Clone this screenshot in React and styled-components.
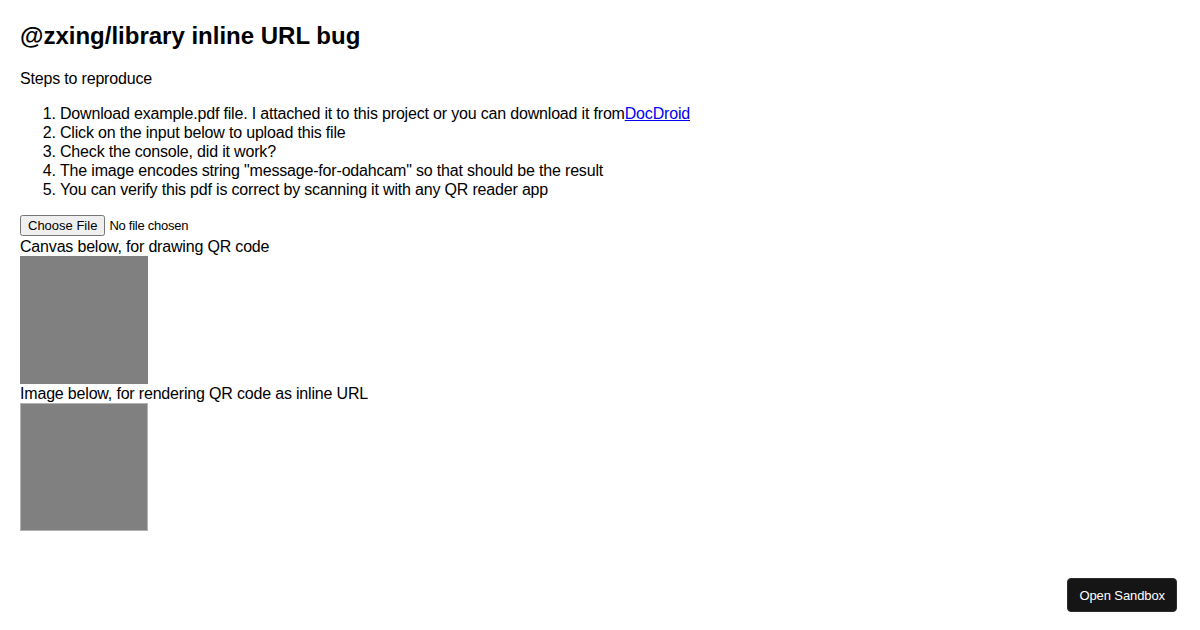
import styled, { createGlobalStyle } from "styled-components";

const GlobalStyle = createGlobalStyle`
  body {
    margin: 0;
    padding: 0 20px;
    font-family: "Liberation Sans", Arial, sans-serif;
    color: #000;
    background: #fff;
  }
`;

const Title = styled.h2`
  font-size: 24px;
  font-weight: bold;
  margin: 22px 0 19px;
`;

const Intro = styled.p`
  font-size: 16px;
  line-height: 19px;
  letter-spacing: -0.18px;
  margin: 0;
`;

const Steps = styled.ol`
  margin: 16px 0 13px;
  padding-left: 40px;
  font-size: 16px;
  line-height: 19px;
  letter-spacing: -0.18px;
`;

const DocLink = styled.a`
  color: #0000ee;
  text-decoration: underline;
`;

const FileRow = styled.div`
  font-size: 16px;
  line-height: 25px;
  height: 25px;
`;

const FileInput = styled.input`
  font-family: "Liberation Sans", Arial, sans-serif;
  font-size: 13px;
  letter-spacing: -0.25px;
  vertical-align: middle;
`;

const Caption = styled.div`
  font-size: 16px;
  line-height: 19px;
  letter-spacing: -0.18px;
`;

const QrBox = styled.div`
  width: 128px;
  height: 128px;
  box-sizing: border-box;
  background: #808080;
  border: ${(p) => (p.$framed ? "1px solid #b3b3b3" : "none")};
`;

const SandboxButton = styled.button`
  position: fixed;
  right: 23px;
  bottom: 18px;
  background: #151515;
  color: #fff;
  border: 1px solid #2b2b2b;
  border-radius: 4px;
  padding: 0 11px;
  height: 34px;
  font-family: "Liberation Sans", Arial, sans-serif;
  font-size: 13px;
  letter-spacing: -0.1px;
  cursor: pointer;
`;

export default function App() {
  return (
    <>
      <GlobalStyle />
      <Title>@zxing/library inline URL bug</Title>
      <Intro>Steps to reproduce</Intro>
      <Steps>
        <li>
          Download example.pdf file. I attached it to this project or you can download it from
          <DocLink href="#">DocDroid</DocLink>
        </li>
        <li>Click on the input below to upload this file</li>
        <li>Check the console, did it work?</li>
        <li>The image encodes string "message-for-odahcam" so that should be the result</li>
        <li>You can verify this pdf is correct by scanning it with any QR reader app</li>
      </Steps>
      <FileRow>
        <FileInput type="file" />
      </FileRow>
      <Caption>Canvas below, for drawing QR code</Caption>
      <QrBox />
      <Caption>Image below, for rendering QR code as inline URL</Caption>
      <QrBox $framed />
      <SandboxButton>Open Sandbox</SandboxButton>
    </>
  );
}
